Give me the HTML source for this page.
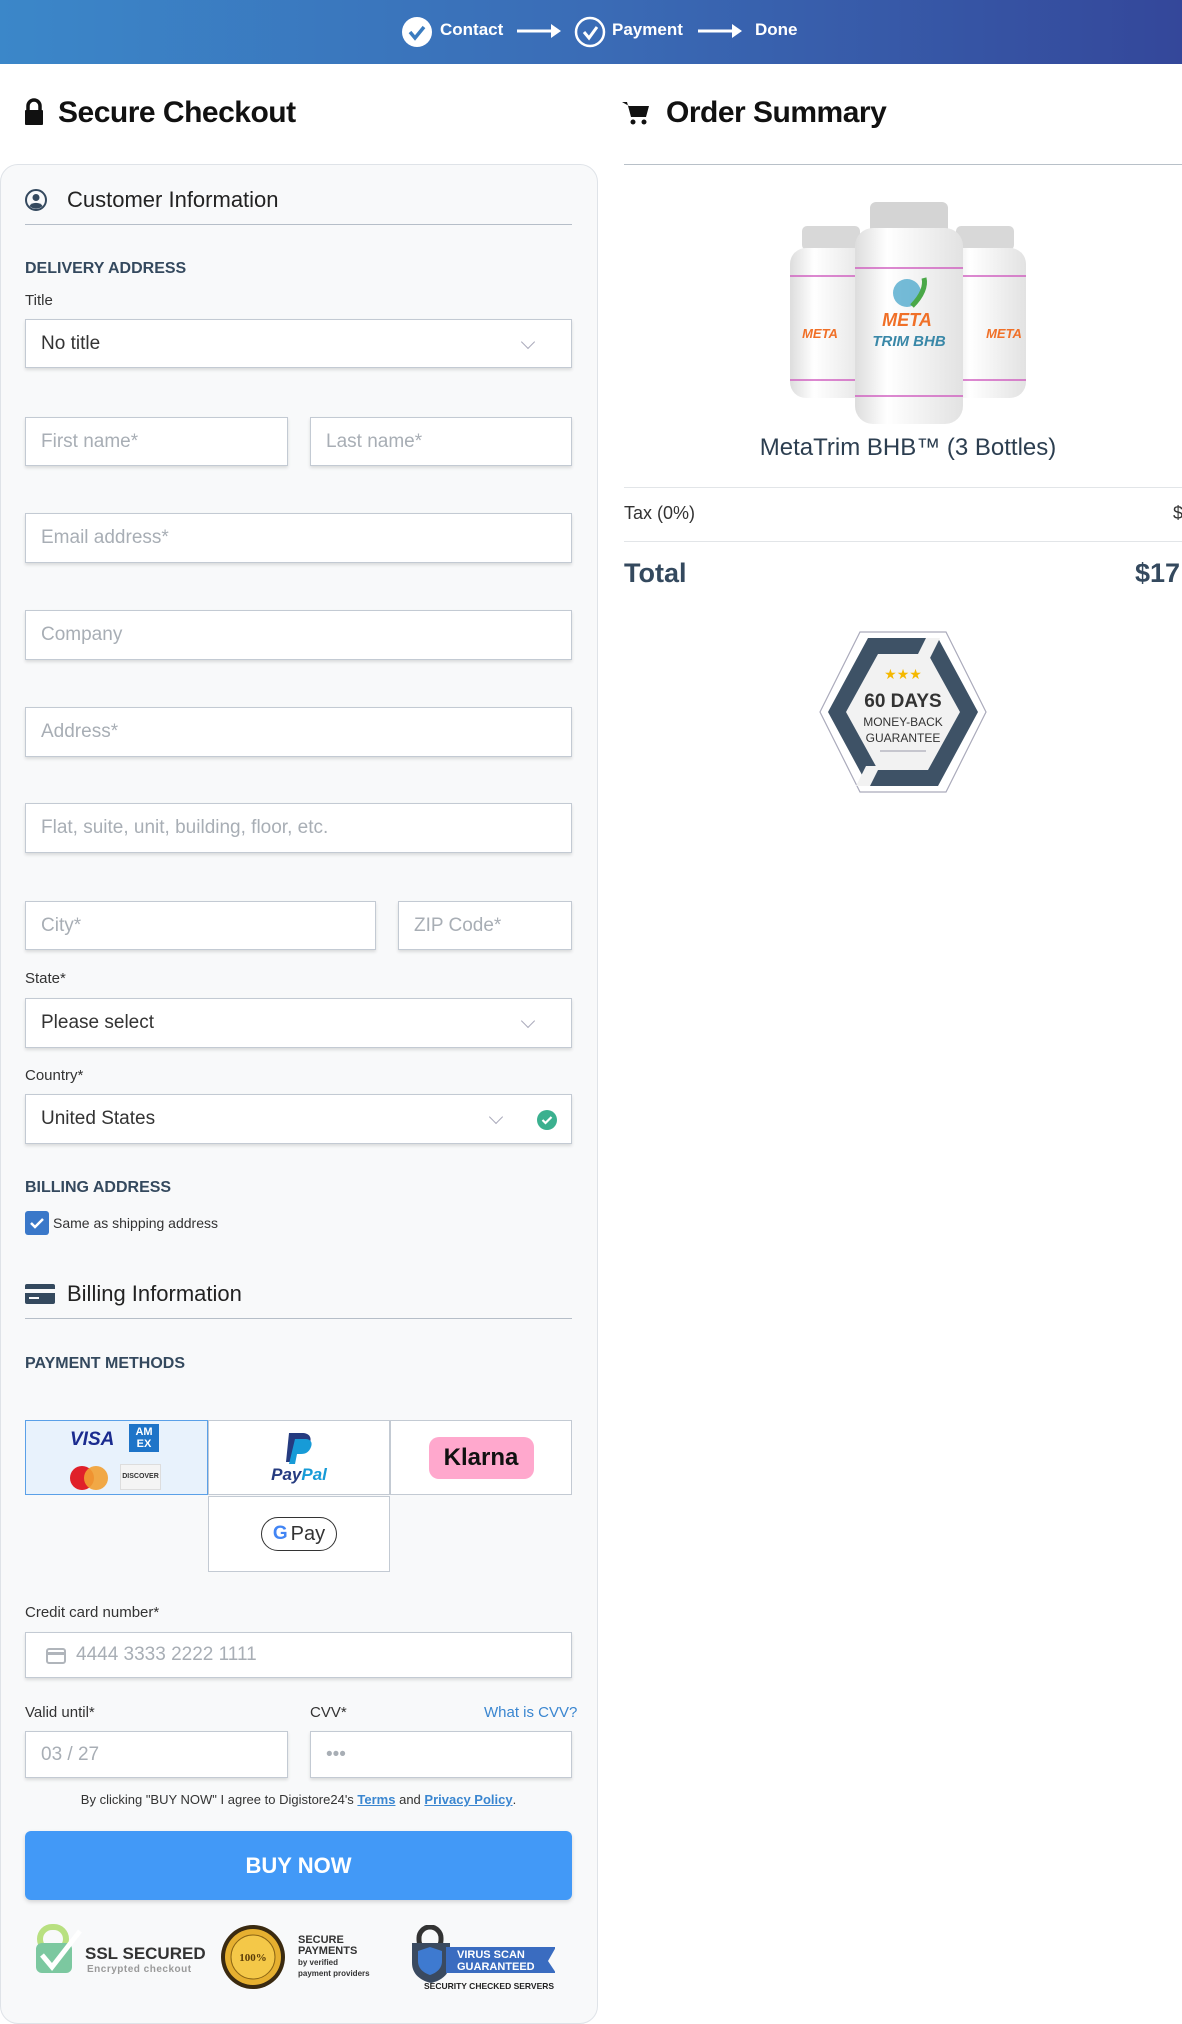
<!DOCTYPE html>
<html><head><meta charset="utf-8"><style>
*{box-sizing:border-box;margin:0;padding:0}
body{width:1182px;height:2005px;overflow:hidden;background:#fff;font-family:"Liberation Sans",Arial,sans-serif;color:#333;position:relative}
.abs{position:absolute}
.hdr{left:0;top:0;width:1182px;height:64px;background:linear-gradient(90deg,#3b87c9,#3a6cb6 50%,#34479a)}
.step{color:#fff;font-weight:bold;font-size:17px;top:20px}
h1{position:absolute;font-size:30px;font-weight:bold;color:#111;letter-spacing:-.5px}
.card{left:0;top:164px;width:598px;height:1860px;background:#f8f9fa;border:1px solid #dfe3e8;border-radius:18px}
.sec{font-size:22px;color:#222}
.line{height:1px;background:#b6bec8}
.cap{font-size:16px;font-weight:bold;color:#34495e}
.lbl{font-size:15px;color:#333}
.in{background:#fff;border:1px solid #c3cad3;box-shadow:0 2px 3px rgba(0,0,0,.12);font-size:19px;color:#a8aeb5;padding-left:15px;display:flex;align-items:center}
.in.v{color:#333}
.chev{position:absolute;right:38px;top:17px;width:10px;height:10px;border-right:1.5px solid #aab;border-bottom:1.5px solid #aab;transform:rotate(45deg)}
.tile{background:#fff;border:1px solid #c3cad3;display:flex;align-items:center;justify-content:center}
</style></head><body>
<div class="abs hdr"></div>
<svg class="abs" style="left:401px;top:16px" width="32" height="32"><circle cx="16" cy="16" r="15" fill="#fff"/><path d="M9 16l5 6 9-11" stroke="#3a7cc0" stroke-width="3.5" fill="none"/></svg>
<div class="abs step" style="left:440px">Contact</div>
<svg class="abs" style="left:517px;top:22px" width="48" height="18"><path d="M0 9h36" stroke="#fff" stroke-width="3"/><path d="M34 2l10 7-10 7z" fill="#fff"/></svg>
<svg class="abs" style="left:574px;top:16px" width="32" height="32"><circle cx="16" cy="16" r="14" fill="none" stroke="#fff" stroke-width="2.5"/><path d="M10 16l5 6 8-11" stroke="#fff" stroke-width="3" fill="none"/></svg>
<div class="abs step" style="left:612px">Payment</div>
<svg class="abs" style="left:698px;top:22px" width="48" height="18"><path d="M0 9h36" stroke="#fff" stroke-width="3"/><path d="M34 2l10 7-10 7z" fill="#fff"/></svg>
<div class="abs step" style="left:755px">Done</div>

<svg class="abs" style="left:24px;top:98px" width="20" height="28"><path d="M4 12V8a6 6 0 0 1 12 0v4" stroke="#111" stroke-width="3.5" fill="none"/><rect x="1" y="12" width="18" height="15" rx="1" fill="#111"/></svg>
<h1 style="left:58px;top:96px">Secure Checkout</h1>
<svg class="abs" style="left:622px;top:100px" width="28" height="26"><path d="M0 2h5l4 15h15l3-11H7z" fill="#111"/><circle cx="11" cy="22" r="2.5" fill="#111"/><circle cx="22" cy="22" r="2.5" fill="#111"/></svg>
<h1 style="left:666px;top:96px">Order Summary</h1>
<div class="abs line" style="left:624px;top:164px;width:558px;background:#b8c0c8"></div>

<div class="abs card"></div>
<svg class="abs" style="left:25px;top:189px" width="22" height="22"><circle cx="11" cy="11" r="10" fill="none" stroke="#34495e" stroke-width="2"/><circle cx="11" cy="8.5" r="3.5" fill="#34495e"/><path d="M4.5 17a7 5 0 0 1 13 0 9 9 0 0 1-13 0z" fill="#34495e"/></svg>
<div class="abs sec" style="left:67px;top:187px">Customer Information</div>
<div class="abs line" style="left:25px;top:224px;width:547px"></div>
<div class="abs cap" style="left:25px;top:260px">DELIVERY ADDRESS</div>
<div class="abs lbl" style="left:25px;top:292px">Title</div>
<div class="abs in v" style="left:25px;top:319px;width:547px;height:49px">No title<span class="chev"></span></div>
<div class="abs in" style="left:25px;top:417px;width:263px;height:49px">First name*</div>
<div class="abs in" style="left:310px;top:417px;width:262px;height:49px">Last name*</div>
<div class="abs in" style="left:25px;top:513px;width:547px;height:50px">Email address*</div>
<div class="abs in" style="left:25px;top:610px;width:547px;height:50px">Company</div>
<div class="abs in" style="left:25px;top:707px;width:547px;height:50px">Address*</div>
<div class="abs in" style="left:25px;top:803px;width:547px;height:50px">Flat, suite, unit, building, floor, etc.</div>
<div class="abs in" style="left:25px;top:901px;width:351px;height:49px">City*</div>
<div class="abs in" style="left:398px;top:901px;width:174px;height:49px">ZIP Code*</div>
<div class="abs lbl" style="left:25px;top:970px">State*</div>
<div class="abs in v" style="left:25px;top:998px;width:547px;height:50px">Please select<span class="chev"></span></div>
<div class="abs lbl" style="left:25px;top:1067px">Country*</div>
<div class="abs in v" style="left:25px;top:1094px;width:547px;height:50px">United States<span class="chev" style="right:70px"></span>
<svg class="abs" style="right:14px;top:15px" width="20" height="20"><circle cx="10" cy="10" r="10" fill="#3bb08f"/><path d="M5.5 10l3 3 6-6" stroke="#fff" stroke-width="2.2" fill="none"/></svg></div>
<div class="abs cap" style="left:25px;top:1179px">BILLING ADDRESS</div>
<svg class="abs" style="left:25px;top:1211px" width="24" height="24"><rect width="24" height="24" rx="3" fill="#3a78c9"/><path d="M6 12l4 4 8-8" stroke="#fff" stroke-width="2.5" fill="none"/></svg>
<div class="abs" style="left:53px;top:1215px;font-size:14px;color:#333">Same as shipping address</div>
<svg class="abs" style="left:25px;top:1284px" width="30" height="20"><rect width="30" height="20" rx="2" fill="#34495e"/><rect y="5" width="30" height="4" fill="#f8f9fa"/><rect x="4" y="13" width="10" height="2" fill="#f8f9fa"/></svg>
<div class="abs sec" style="left:67px;top:1281px">Billing Information</div>
<div class="abs line" style="left:25px;top:1318px;width:547px"></div>
<div class="abs cap" style="left:25px;top:1355px">PAYMENT METHODS</div>

<div class="abs tile" style="left:25px;top:1420px;width:183px;height:75px;background:#e8f2fc;border-color:#5aa0e8;display:block">
<div class="abs" style="left:44px;top:8px;font:italic bold 19px 'Liberation Sans';color:#1a2b8f">VISA</div>
<div class="abs" style="left:103px;top:3px;width:30px;height:28px;background:#1e74c8;color:#fff;font:bold 11px 'Liberation Sans';line-height:12px;text-align:center;padding-top:2px">AM<br>EX</div>
<svg class="abs" style="left:43px;top:44px" width="40" height="26"><circle cx="13" cy="13" r="12" fill="#e0202a"/><circle cx="27" cy="13" r="12" fill="#f2a032" opacity=".9"/></svg>
<div class="abs" style="left:94px;top:43px;width:41px;height:26px;border:1px solid #ddd;background:#f4f4f4;font:bold 7px 'Liberation Sans';color:#333;text-align:center;line-height:24px">DISCOVER</div>
</div>
<div class="abs tile" style="left:208px;top:1420px;width:182px;height:75px;flex-direction:column">
<svg width="36" height="34"><path d="M8 2h13c7 0 10 4 8 10s-6 8-12 8h-4l-2 11H5z" fill="#253b80"/><path d="M14 8h10c5 0 8 3 6 8s-5 7-10 7h-4l-2 10h-6z" fill="#179bd7"/></svg>
<div style="font:italic bold 17px 'Liberation Sans';color:#253b80">Pay<span style="color:#179bd7">Pal</span></div></div>
<div class="abs tile" style="left:390px;top:1420px;width:182px;height:75px"><div style="background:#ffa8cd;border-radius:10px;width:105px;height:42px;font:bold 24px 'Liberation Sans';color:#111;text-align:center;line-height:42px">Klarna</div></div>
<div class="abs tile" style="left:208px;top:1496px;width:182px;height:76px"><div style="border:1.5px solid #333;border-radius:20px;width:76px;height:34px;font-size:20px;color:#333;display:flex;align-items:center;justify-content:center;gap:3px"><b style="color:#4285f4;font-size:19px">G</b>Pay</div></div>

<div class="abs lbl" style="left:25px;top:1604px">Credit card number*</div>
<div class="abs in" style="left:25px;top:1632px;width:547px;height:46px;padding-left:50px">4444 3333 2222 1111
<svg class="abs" style="left:20px;top:15px" width="20" height="16"><rect x="1" y="1" width="18" height="14" rx="2" fill="none" stroke="#b0b5bb" stroke-width="2"/><rect x="1" y="4" width="18" height="3" fill="#b0b5bb"/></svg></div>
<div class="abs lbl" style="left:25px;top:1704px">Valid until*</div>
<div class="abs lbl" style="left:310px;top:1704px">CVV*</div>
<div class="abs lbl" style="left:484px;top:1704px;color:#3a86d0">What is CVV?</div>
<div class="abs in" style="left:25px;top:1731px;width:263px;height:47px">03 / 27</div>
<div class="abs in" style="left:310px;top:1731px;width:262px;height:47px">•••</div>
<div class="abs" style="left:25px;top:1792px;width:547px;text-align:center;font-size:13px;color:#333">By clicking "BUY NOW" I agree to Digistore24's <u style="color:#3a86d0;font-weight:bold">Terms</u> and <u style="color:#3a86d0;font-weight:bold">Privacy Policy</u>.</div>
<div class="abs" style="left:25px;top:1831px;width:547px;height:69px;background:#4299f7;border-radius:6px;color:#fff;font-weight:bold;font-size:22px;text-align:center;line-height:69px;box-shadow:0 2px 4px rgba(0,0,0,.15)">BUY NOW</div>

<svg class="abs" style="left:36px;top:1923px" width="48" height="52"><rect x="4" y="4" width="26" height="24" rx="12" fill="none" stroke="#b8e080" stroke-width="6"/><rect x="0" y="20" width="36" height="30" rx="6" fill="#7cc8a0"/><path d="M6 32l10 12L44 8" stroke="#fff" stroke-width="5" fill="none"/></svg>
<div class="abs" style="left:85px;top:1944px;font:bold 17px 'Liberation Sans';color:#333">SSL SECURED</div>
<div class="abs" style="left:87px;top:1964px;font:bold 10px 'Liberation Sans';color:#999;letter-spacing:.5px">Encrypted checkout</div>
<svg class="abs" style="left:220px;top:1924px" width="66" height="66"><circle cx="33" cy="33" r="32" fill="#3a2a10"/><circle cx="33" cy="33" r="28" fill="#e6b030"/><circle cx="33" cy="33" r="22" fill="#f4c848" stroke="#8a6414"/><text x="33" y="37" font-size="11" font-weight="bold" text-anchor="middle" fill="#5a3c08" font-family="Liberation Serif">100%</text></svg>
<div class="abs" style="left:298px;top:1935px;font:bold 11px 'Liberation Sans';color:#333;line-height:11px">SECURE<br>PAYMENTS<br><span style="font-size:8px;line-height:9px">by verified<br>payment providers</span></div>
<svg class="abs" style="left:410px;top:1925px" width="145" height="70"><rect x="9" y="2" width="22" height="24" rx="11" fill="none" stroke="#333" stroke-width="5"/><path d="M2 18h38v20c0 12-10 18-19 20C12 56 2 50 2 38z" fill="#3a4a60"/><path d="M20 22l12 4v10c0 8-6 12-12 14-6-2-12-6-12-14V26z" fill="#3e7ad0"/><path d="M36 22h110l-8 14 8 12H36z" fill="#3a6cc0"/><text x="47" y="33" font-size="11" font-weight="bold" fill="#fff" font-family="Liberation Sans">VIRUS SCAN</text><text x="47" y="45" font-size="11" font-weight="bold" fill="#fff" font-family="Liberation Sans">GUARANTEED</text><text x="14" y="64" font-size="8.5" font-weight="bold" fill="#222" font-family="Liberation Sans">SECURITY CHECKED SERVERS</text></svg>

<svg class="abs" style="left:780px;top:198px" width="260" height="230">
<defs><linearGradient id="b" x1="0" x2="1"><stop offset="0" stop-color="#ddd"/><stop offset=".3" stop-color="#fff"/><stop offset="1" stop-color="#e2e2e2"/></linearGradient></defs>
<rect x="22" y="28" width="58" height="24" rx="5" fill="#d8d8d8"/><rect x="10" y="50" width="80" height="150" rx="16" fill="url(#b)"/>
<rect x="176" y="28" width="58" height="24" rx="5" fill="#d8d8d8"/><rect x="166" y="50" width="80" height="150" rx="16" fill="url(#b)"/>
<path d="M10 78h80M10 182h80M166 78h80M166 182h80" stroke="#d060c0" stroke-width="1.5"/>
<rect x="90" y="4" width="78" height="32" rx="6" fill="#d4d4d4"/><rect x="75" y="30" width="108" height="196" rx="18" fill="url(#b)"/>
<path d="M75 70h108M75 198h108" stroke="#d060c0" stroke-width="1.5"/>
<circle cx="127" cy="95" r="14" fill="#3aa0c8" opacity=".7"/><path d="M132 108c10-10 14-20 12-28" stroke="#4aa848" stroke-width="5" fill="none"/>
<text x="127" y="128" font-size="18" font-weight="bold" font-style="italic" fill="#f07028" text-anchor="middle" font-family="Liberation Sans">META</text>
<text x="129" y="148" font-size="15" font-weight="bold" font-style="italic" fill="#3a88a8" text-anchor="middle" font-family="Liberation Sans">TRIM BHB</text>
<text x="40" y="140" font-size="13" font-weight="bold" font-style="italic" fill="#f07028" text-anchor="middle" font-family="Liberation Sans">META</text>
<text x="224" y="140" font-size="13" font-weight="bold" font-style="italic" fill="#f07028" text-anchor="middle" font-family="Liberation Sans">META</text>
</svg>
<div class="abs" style="left:624px;top:434px;width:568px;text-align:center;font-size:24px;color:#2c3e50">MetaTrim BHB™ (3 Bottles)</div>
<div class="abs" style="left:624px;top:487px;width:558px;height:1px;background:#e2e5e8"></div>
<div class="abs" style="left:624px;top:503px;font-size:18px;color:#333">Tax (0%)</div>
<div class="abs" style="left:1173px;top:503px;font-size:18px;color:#333">$</div>
<div class="abs" style="left:624px;top:541px;width:558px;height:1px;background:#e2e5e8"></div>
<div class="abs" style="left:624px;top:558px;font-size:27px;font-weight:bold;color:#34495e">Total</div>
<div class="abs" style="left:1135px;top:558px;font-size:27px;font-weight:bold;color:#34495e;white-space:nowrap">$17</div>
<svg class="abs" style="left:818px;top:630px" width="170" height="164">
<polygon points="42,2 128,2 168,82 128,162 42,162 2,82" fill="#fff" stroke="#aab" stroke-width="1.2"/>
<polygon points="50,8 120,8 160,82 120,156 50,156 10,82" fill="#3e5266"/>
<polygon points="60,24 110,24 142,82 110,140 60,140 28,82" fill="#f2f2f2"/>
<polygon points="108,8 122,8 112,28 98,28" fill="#f2f2f2"/><polygon points="48,136 62,136 52,156 38,156" fill="#f2f2f2"/>
<text x="85" y="49" font-size="14" fill="#f5b800" text-anchor="middle">★★★</text>
<text x="85" y="77" font-size="19" font-weight="bold" fill="#333" text-anchor="middle" font-family="Liberation Sans">60 DAYS</text>
<text x="85" y="96" font-size="12" fill="#333" text-anchor="middle" font-family="Liberation Sans">MONEY-BACK</text>
<text x="85" y="112" font-size="12" fill="#333" text-anchor="middle" font-family="Liberation Sans">GUARANTEE</text>
<path d="M62 121h46" stroke="#99a" stroke-width="1"/></svg>
</body></html>
